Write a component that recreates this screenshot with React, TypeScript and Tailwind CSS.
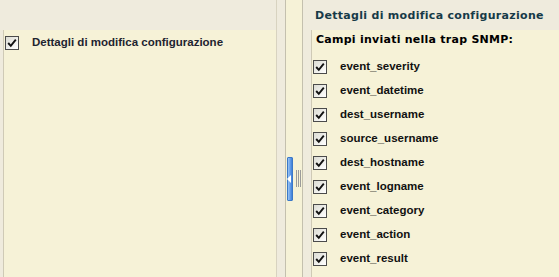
import React from 'react';

const fields = [
  'event_severity',
  'event_datetime',
  'dest_username',
  'source_username',
  'dest_hostname',
  'event_logname',
  'event_category',
  'event_action',
  'event_result',
];

const Check: React.FC = () => (
  <span className="flex h-[14px] w-[14px] shrink-0 items-center justify-center border border-[#4b4b4b] bg-gradient-to-br from-[#dcdcd4] to-white">
    <svg width="10" height="10" viewBox="0 0 10 10">
      <path d="M1.2 5 L3.8 7.8 L8.8 1.6" fill="none" stroke="#111" strokeWidth="1.9" />
    </svg>
  </span>
);

const App: React.FC = () => {
  return (
    <div className="flex h-[277px] w-[559px] overflow-hidden bg-[#efebdd] font-['Liberation_Sans',Arial,sans-serif]">
      {/* pannello sinistro */}
      <div className="flex w-[276px] flex-col pl-[3px] pt-[30px]">
        <div className="flex-1 border-l border-[#cfcab6] bg-[#f6f2d7] pl-[1px] pt-[4px]">
          <div className="flex items-center gap-[13px]">
            <Check />
            <span className="text-[11.5px] font-bold text-[#1e2430]">Dettagli di modifica configurazione</span>
          </div>
        </div>
      </div>

      {/* divisore */}
      <div className="w-[10px] border-l border-[#d8d3c0] border-r border-r-[#c4c0ae]" />
      <div className="flex w-[17px] items-start border-r border-[#c4c0ae] bg-[#f6f2d7] pt-[157px] pl-[1px]">
        <div className="relative h-[44px] w-[6px] rounded-[1px] border border-[#3b78c8] bg-gradient-to-r from-[#9cc4f4] via-[#6aa2ea] to-[#3f7fd8]">
          <span className="absolute left-[-1px] top-[17px] h-0 w-0 border-y-[4px] border-r-[4px] border-y-transparent border-r-white" />
        </div>
        <div className="ml-[3px] mt-[13px] flex gap-[1px]">
          <span className="h-[17px] w-[1px] bg-[#9b9b9b]" />
          <span className="h-[17px] w-[1px] bg-[#9b9b9b]" />
          <span className="h-[17px] w-[1px] bg-[#9b9b9b]" />
        </div>
      </div>

      {/* pannello destro */}
      <div className="flex flex-1 flex-col">
        <div className="flex h-[30px] items-center pl-[12px] pt-[2px] font-['DejaVu_Sans',Verdana,sans-serif] text-[11px] font-bold tracking-[0.3px] text-[#163a48]">
          Dettagli di modifica configurazione
        </div>
        <div className="ml-[8px] flex-1 border-l border-[#cfcab6] bg-[#f6f2d7] pl-[1px]">
          <div className="pl-[3px] pt-[3px] font-['DejaVu_Sans',Verdana,sans-serif] text-[11px] leading-[13px] font-bold tracking-[0.25px] text-black">
            Campi inviati nella trap SNMP:
          </div>
          <div className="flex flex-col pt-[9px]">
            {fields.map(f => (
              <div key={f} className="flex h-[24px] items-center gap-[13px]">
                <Check />
                <span className="text-[11.5px] font-bold text-[#111]">{f}</span>
              </div>
            ))}
          </div>
        </div>
      </div>
    </div>
  );
};

export default App;
